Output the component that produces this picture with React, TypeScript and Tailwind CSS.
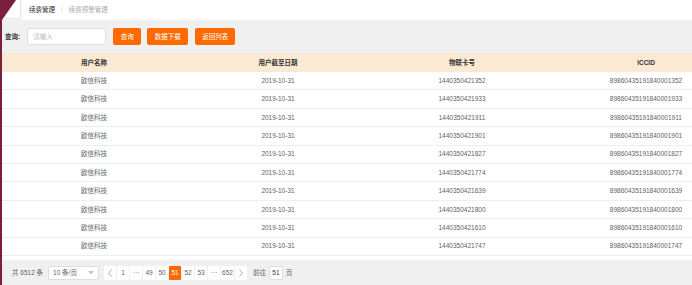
import React from "react";

const rows = [
  { card: "1440350421352", iccid: "89860435191840001352" },
  { card: "1440350421933", iccid: "89860435191840001933" },
  { card: "1440350421911", iccid: "89860435191840001911" },
  { card: "1440350421901", iccid: "89860435191840001901" },
  { card: "1440350421827", iccid: "89860435191840001827" },
  { card: "1440350421774", iccid: "89860435191840001774" },
  { card: "1440350421639", iccid: "89860435191840001639" },
  { card: "1440350421800", iccid: "89860435191840001800" },
  { card: "1440350421610", iccid: "89860435191840001610" },
  { card: "1440350421747", iccid: "89860435191840001747" },
];

const font = { fontFamily: '"Liberation Sans", "Noto Sans CJK SC", sans-serif' };

function PagerBtn({ label, active }: { label: React.ReactNode; active?: boolean }) {
  return (
    <div
      className={
        "h-[14px] min-w-[12px] px-[1px] flex items-center justify-center rounded-[1px] text-[6.5px] " +
        (active ? "bg-[#ff6a00] text-white" : "bg-white text-[#606266]")
      }
    >
      {label}
    </div>
  );
}

function Chevron({ dir }: { dir: "left" | "right" }) {
  return (
    <svg width="6" height="8" viewBox="0 0 6 8">
      <polyline
        points={dir === "left" ? "4.5,0.5 1.5,4 4.5,7.5" : "1.5,0.5 4.5,4 1.5,7.5"}
        fill="none"
        stroke="#909399"
        strokeWidth="0.8"
      />
    </svg>
  );
}

export default function App() {
  return (
    <div className="relative w-[692px] h-[285px] overflow-hidden bg-white flex" style={font}>
      {/* left stripe */}
      <div className="w-[2px] bg-[#7b1f3d] shrink-0" />
      <svg className="absolute left-0 top-0" width="18" height="22" viewBox="0 0 18 22">
        <polygon points="0,0 16,0 2,20 0,22" fill="#7b1f3d" />
      </svg>

      <div className="flex-1 flex flex-col min-w-0">
        {/* breadcrumb */}
        <div className="h-[20px] flex items-center bg-white">
          <div className="w-[18px] h-[18px] self-start bg-white shadow-[1px_1px_2px_rgba(0,0,0,0.15)]" />
          <div className="ml-[9px] flex items-center text-[6.5px] pb-[1px]">
            <span className="text-[#303133]">续费管理</span>
            <span className="mx-[6px] text-[#c0c4cc]">/</span>
            <span className="text-[#a8abb2]">续费预警管理</span>
          </div>
        </div>

        {/* search bar */}
        <div className="h-[33px] bg-[#f0f0f0] flex items-center pl-[3px]">
          <span className="text-[6.5px] text-[#303133] font-bold">查询:</span>
          <div className="ml-[7px] w-[79px] h-[17px] bg-white border border-[#dcdfe6] rounded-[2px] flex items-center pl-[5px] text-[6.5px] text-[#b4b7be]">
            请输入
          </div>
          <button className="ml-[7px] w-[28px] h-[17px] bg-[#ff6a00] text-white text-[6.5px] rounded-[2px]">查询</button>
          <button className="ml-[6px] w-[41px] h-[17px] bg-[#ff6a00] text-white text-[6.5px] rounded-[2px]">数据下载</button>
          <button className="ml-[7px] w-[40px] h-[17px] bg-[#ff6a00] text-white text-[6.5px] rounded-[2px]">返回列表</button>
        </div>

        {/* table */}
        <div className="w-[736px]">
          <div className="h-[19px] bg-[#fbe9d3] grid grid-cols-4 items-center text-[6.5px] font-bold text-[#303133]">
            <div className="text-center">用户名称</div>
            <div className="text-center">用户截至日期</div>
            <div className="text-center">物联卡号</div>
            <div className="text-center">ICCID</div>
          </div>
          {rows.map((r) => (
            <div
              key={r.card}
              className="h-[18.4px] grid grid-cols-4 items-center text-[6.5px] text-[#606266] border-b border-[#ebeef5]"
            >
              <div className="text-center">欧信科技</div>
              <div className="text-center">2019-10-31</div>
              <div className="text-center">{r.card}</div>
              <div className="text-center">{r.iccid}</div>
            </div>
          ))}
        </div>

        {/* pagination */}
        <div className="mt-[4px] flex-1 bg-[#f0f0f0] flex items-center pl-[10px] pt-[1px] text-[6.5px] text-[#606266]">
          <span>共 6512 条</span>
          <div className="ml-[5px] w-[51px] h-[14px] bg-white border border-[#dcdfe6] rounded-[2px] flex items-center justify-between px-[4px]">
            <span>10 条/页</span>
            <svg width="6" height="4" viewBox="0 0 6 4">
              <polygon points="0,0 6,0 3,3.5" fill="#c0c4cc" />
            </svg>
          </div>
          <div className="ml-[5px] flex items-center gap-[1px]">
            <PagerBtn label={<Chevron dir="left" />} />
            <PagerBtn label="1" />
            <PagerBtn label="···" />
            <PagerBtn label="49" />
            <PagerBtn label="50" />
            <PagerBtn label="51" active />
            <PagerBtn label="52" />
            <PagerBtn label="53" />
            <PagerBtn label="···" />
            <PagerBtn label="652" />
            <PagerBtn label={<Chevron dir="right" />} />
          </div>
          <span className="ml-[6px]">前往</span>
          <div className="ml-[3px] w-[14px] h-[14px] bg-white border border-[#dcdfe6] rounded-[2px] flex items-center justify-center text-[#303133]">
            51
          </div>
          <span className="ml-[3px]">页</span>
        </div>
      </div>
    </div>
  );
}
